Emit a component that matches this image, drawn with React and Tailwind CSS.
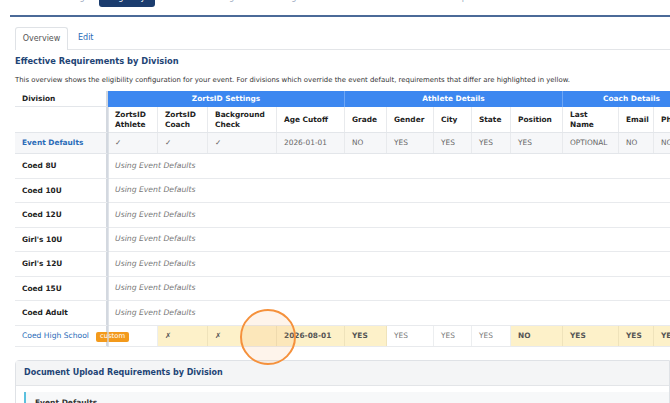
import React from 'react';

const navItems = ['Details', 'Pricing', 'Eligibility', 'Divisions', 'Registration', 'Registrations', 'Schedule', 'Financials', 'Reports'];

const cols = 'grid grid-cols-[93px_50px_50px_69px_68px_42px_47px_38px_39px_52px_56px_35px_47px_60px]';

const subHeads = [
  ['ZortsID', 'Athlete'],
  ['ZortsID', 'Coach'],
  ['Background', 'Check'],
  ['Age Cutoff'],
  ['Grade'],
  ['Gender'],
  ['City'],
  ['State'],
  ['Position'],
  ['Last', 'Name'],
  ['Email'],
  ['Phone'],
  ['Address'],
];

const defaults = ['✓', '✓', '✓', '2026-01-01', 'NO', 'YES', 'YES', 'YES', 'YES', 'OPTIONAL', 'NO', 'NO', 'NO'];

// [value, highlighted]
const custom = [
  ['', false],
  ['✗', true],
  ['✗', true],
  ['2026-08-01', true],
  ['YES', true],
  ['YES', false],
  ['YES', false],
  ['YES', false],
  ['NO', true],
  ['YES', true],
  ['YES', true],
  ['YES', true],
  ['YES', true],
];

const divisions = ['Coed 8U', 'Coed 10U', 'Coed 12U', "Girl's 10U", "Girl's 12U", 'Coed 15U', 'Coed Adult'];

const App = () => {
  return (
    <div className="relative w-[670px] h-[403px] overflow-hidden bg-white font-['DejaVu_Sans',sans-serif]">
      {/* top nav, scrolled mostly out of view */}
      <div className="h-[8px] overflow-hidden">
        <div className="flex items-end gap-[14px] pl-[16px] -mt-[10px]">
          {navItems.map((n) =>
            n === 'Eligibility' ? (
              <span key={n} className="h-[17px] px-[10px] flex items-end pb-[3px] rounded-[3px] bg-[#1b3c6e] text-white text-[8px]">{n}</span>
            ) : (
              <span key={n} className="h-[17px] flex items-end pb-[3px] text-[8px] text-[#9aa8bd]">{n}</span>
            )
          )}
        </div>
      </div>
      <div className="ml-[10px] mt-[7px] h-[2px] bg-[#4b6a98]" />

      <div className="pl-[15px]">
        {/* tabs */}
        <div className="mt-[11px] flex items-end h-[22px] border-b border-[#e3e5e8]">
          <div className="h-[23px] -mb-px w-[53px] flex items-center justify-center border border-b-0 border-[#dfe2e6] rounded-t-[3px] bg-white text-[8px] text-[#555]">Overview</div>
          <div className="h-[22px] flex items-center pl-[10px] text-[8px] text-[#2a6cb8]">Edit</div>
        </div>

        <h2 className="mt-[5px] h-[13px] leading-[13px] text-[8.3px] font-bold text-[#1e4475]">Effective Requirements by Division</h2>
        <p className="mt-[7px] h-[11px] leading-[11px] text-[6.9px] text-[#333]">
          This overview shows the eligibility configuration for your event. For divisions which override the event default, requirements that differ are highlighted in yellow.
        </p>

        {/* table */}
        <div className="relative mt-[5px] w-[700px] text-[7.4px]">
          <div className={`${cols} h-[16px]`}>
            <div className="flex items-center pl-[7px] font-bold text-[#222] border-b border-[#e3e6ea] border-r-2 border-r-[#d3d8df]">Division</div>
            <div className="col-span-4 flex items-center justify-center bg-[#3c87f0] text-white font-bold border-r border-[#6ea6f5]">ZortsID Settings</div>
            <div className="col-span-5 flex items-center justify-center bg-[#3c87f0] text-white font-bold border-r border-[#6ea6f5]">Athlete Details</div>
            <div className="col-span-3 flex items-center justify-center bg-[#3c87f0] text-white font-bold border-r border-[#6ea6f5]">Coach Details</div>
            <div className="bg-[#3c87f0]" />
          </div>

          <div className={`${cols} h-[26px] border-b border-[#e3e6ea]`}>
            <div className="border-r-2 border-[#d3d8df]" />
            {subHeads.map((h, i) => (
              <div key={i} className="flex flex-col justify-center pl-[7px] font-bold text-[#222] leading-[10px] border-r border-[#e8eaed] whitespace-nowrap">
                {h.map((l) => (
                  <span key={l}>{l}</span>
                ))}
              </div>
            ))}
          </div>

          <div className={`${cols} h-[21px] bg-[#f6f7f9] border-b border-[#e3e6ea]`}>
            <div className="flex items-center pl-[7px] font-bold text-[#2a6cb8] border-r-2 border-[#d3d8df]">Event Defaults</div>
            {defaults.map((v, i) => (
              <div key={i} className="flex items-center pl-[7px] text-[#666] border-r border-[#e8eaed] whitespace-nowrap">{v}</div>
            ))}
          </div>

          {divisions.map((d) => (
            <div key={d} className={`${cols} h-[24.5px] border-b border-[#e8eaed]`}>
              <div className="flex items-center pl-[7px] font-bold text-[#222] border-r-2 border-[#d3d8df]">{d}</div>
              <div className="col-span-13 flex items-center pl-[7px] italic text-[7.7px] text-[#777]">Using Event Defaults</div>
            </div>
          ))}

          <div className={`${cols} h-[21px] border-b border-[#e8eaed]`}>
            <div className="relative flex items-center pl-[7px] border-r-2 border-[#d3d8df]">
              <span className="text-[#2a6cb8] text-[7.6px] whitespace-nowrap">Coed High School</span>
              <span className="absolute left-[81px] top-[6px] h-[10px] px-[4px] flex items-center rounded-[2px] bg-[#f39a1c] text-white text-[6.8px] whitespace-nowrap">custom</span>
            </div>
            {custom.map(([v, hl], i) =>
              hl ? (
                <div key={i} className="flex items-center pl-[7px] bg-[#fdf1c9] text-[#555] font-bold border-r border-[#efe3bb] whitespace-nowrap">{v}</div>
              ) : (
                <div key={i} className="flex items-center pl-[7px] text-[#777] border-r border-[#eceef0] whitespace-nowrap">{v}</div>
              )
            )}
          </div>
          {/* divider line drawn over the badge */}
          <div className="absolute left-[92px] top-[16px] bottom-0 w-[2px] bg-[#d3d8df]/70" />
        </div>

        {/* document upload panel */}
        <div className="mt-[13px] border border-[#dfe2e6] rounded-tl-[4px]">
          <div className="h-[25px] flex items-center pl-[8px] bg-[#f4f5f6] border-b border-[#e3e5e8] text-[8px] font-bold text-[#1e4475]">Document Upload Requirements by Division</div>
          <div className="pt-[6px] pl-[8px]">
            <div className="h-[30px] border-l-2 border-[#5bc0de] bg-[#f7f8f9] pl-[9px] pt-[5px] text-[7.5px] font-bold text-[#333]">Event Defaults</div>
          </div>
        </div>
      </div>

      {/* annotation circle */}
      <div className="absolute left-[240px] top-[309px] w-[56px] h-[56px] rounded-full border-2 border-[#f5913c] bg-[#f7913c]/10" />
    </div>
  );
};

export default App;
